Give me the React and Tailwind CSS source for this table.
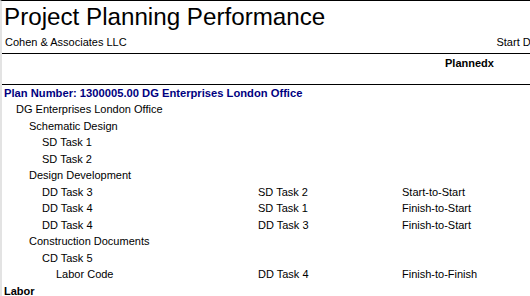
import React from 'react';

const rows = [
  { level: 1, name: 'DG Enterprises London Office' },
  { level: 2, name: 'Schematic Design' },
  { level: 3, name: 'SD Task 1' },
  { level: 3, name: 'SD Task 2' },
  { level: 2, name: 'Design Development' },
  { level: 3, name: 'DD Task 3', pred: 'SD Task 2', type: 'Start-to-Start' },
  { level: 3, name: 'DD Task 4', pred: 'SD Task 1', type: 'Finish-to-Start' },
  { level: 3, name: 'DD Task 4', pred: 'DD Task 3', type: 'Finish-to-Start' },
  { level: 2, name: 'Construction Documents' },
  { level: 3, name: 'CD Task 5' },
  { level: 4, name: 'Labor Code', pred: 'DD Task 4', type: 'Finish-to-Finish' },
];

const indent = {
  1: 'pl-[14px]',
  2: 'pl-[27px]',
  3: 'pl-[40px]',
  4: 'pl-[54px]',
};

export default function App() {
  return (
    <div
      className="w-[530px] h-[296px] overflow-hidden bg-white border-t border-black border-l-2 border-l-[#e3e3e3] text-black text-[11px]"
      style={{ fontFamily: '"Liberation Sans", Arial, sans-serif' }}
    >
      <h1 className="pl-[2px] h-[31px] text-[24.2px] leading-[31px] whitespace-nowrap">
        Project Planning Performance
      </h1>

      <div className="flex justify-between h-[21px] items-center pl-[3px] whitespace-nowrap">
        <span>Cohen &amp; Associates LLC</span>
        <span className="mr-[-16px]">Start Date</span>
      </div>

      <div className="border-t border-black h-[31px] pl-[443px] pt-[1px] font-bold">Plannedx</div>

      <div className="border-t border-black">
        <div className="h-[16px] leading-[16px] pl-[2px] font-bold text-[#000080] text-[11.2px] whitespace-nowrap">
          Plan Number: 1300005.00 DG Enterprises London Office
        </div>
        {rows.map((r, i) => (
          <div key={i} className="grid grid-cols-[256px_144px_1fr] h-[16.55px] leading-[16.55px] whitespace-nowrap">
            <span className={indent[r.level]}>{r.name}</span>
            <span>{r.pred}</span>
            <span>{r.type}</span>
          </div>
        ))}
        <div className="h-[16px] leading-[16px] pl-[2px] font-bold">Labor</div>
      </div>
    </div>
  );
}
